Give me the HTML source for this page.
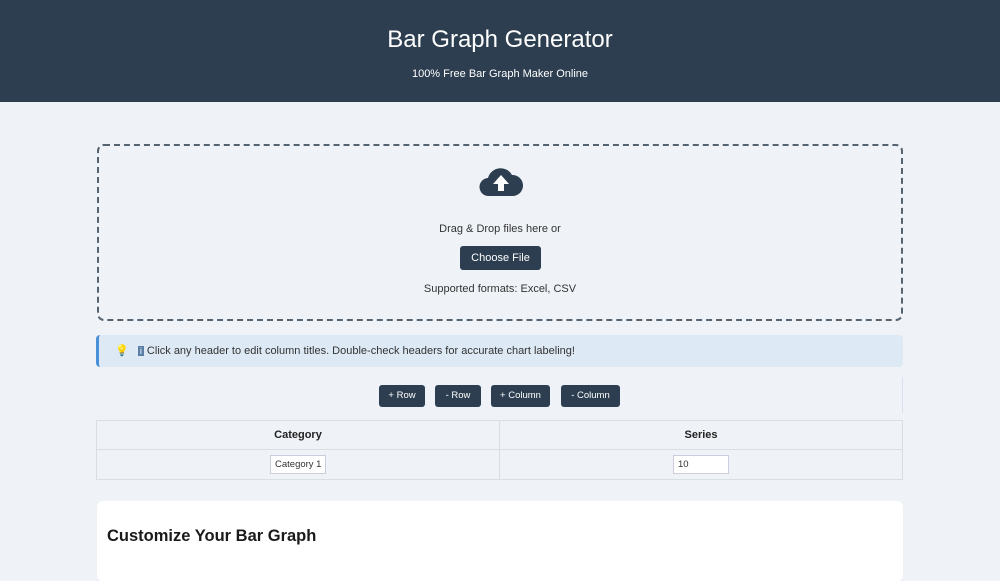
<!DOCTYPE html>
<html><head><style>
*{box-sizing:border-box;margin:0;padding:0}
body{width:1000px;height:563px;overflow:hidden;background:#eff3f7;font-family:"Liberation Sans","DejaVu Sans",sans-serif;color:#2c3e50;position:relative}
.hdr{position:absolute;left:0;top:0;width:1000px;height:102px;background:#2c3e50;color:#fff;text-align:center}
.hdr h1{position:absolute;top:26px;width:100%;font-size:24px;font-weight:normal}
.hdr p{position:absolute;top:68px;width:100%;font-size:11px}
.up{position:absolute;left:97px;top:144px;width:806px;height:177px;border:2px dashed #556270;border-radius:7px;text-align:center;font-size:11px;color:#333}
.btn{background:#2c3e50;color:#fff;border-radius:3px;display:inline-block}
.info{position:absolute;left:96px;top:335px;width:807px;height:32px;background:#dde9f4;border-left:3px solid #4a90d9;border-radius:4px;font-size:11px;color:#333;padding:9px 0 0 16px}
.sb{position:absolute;top:385px;height:22px;font-size:9.5px;line-height:22px;text-align:center}
table{position:absolute;left:96px;top:420px;width:807px;border-collapse:collapse;font-size:11px}
td,th{border:1px solid #d9dee3;text-align:center;width:50%}
th{height:29px;font-weight:bold;color:#222}
td{height:30px}
.in{display:inline-block;background:#fff;border:1px solid #ccd;height:19px;font-size:9.5px;line-height:17px;text-align:left;padding-left:4px;color:#333}
.card{position:absolute;left:97px;top:501px;width:806px;height:80px;background:#fff;border-radius:6px}
.card h2{position:absolute;left:10px;top:26px;font-size:16.5px;font-weight:bold;color:#1a1a1a}
</style></head><body>
<div class="hdr"><h1>Bar Graph Generator</h1><p>100% Free Bar Graph Maker Online</p></div>
<div class="up">
<svg style="position:absolute;left:380px;top:20px" width="44" height="32" viewBox="0 0 44 32"><path d="M10 30 A9 9 0 0 1 9 12 A13 13 0 0 1 33 9 A10.5 10.5 0 0 1 34 30 Z" fill="#2c3e50"/><path d="M22 9 L30 18 H25 V25 H19 V18 H14 Z" fill="#fff"/></svg>
<div style="position:absolute;top:77px;width:100%">Drag &amp; Drop files here or</div>
<div class="btn" style="position:absolute;left:361px;top:100px;width:81px;height:24px;line-height:24px;font-size:11px">Choose File</div>
<div style="position:absolute;top:137px;width:100%">Supported formats: Excel, CSV</div>
</div>
<div class="info">💡&nbsp;&nbsp; <span style="background:#5b7fa6;color:#fff;font-size:9px;padding:0 2px">i</span> Click any header to edit column titles. Double-check headers for accurate chart labeling!</div>
<div class="btn sb" style="left:379px;width:46px">+ Row</div>
<div class="btn sb" style="left:435px;width:46px">- Row</div>
<div class="btn sb" style="left:491px;width:59px">+ Column</div>
<div class="btn sb" style="left:561px;width:59px">- Column</div>
<div style="position:absolute;left:902px;top:377px;width:1px;height:36px;background:#dde"></div>
<table><tr><th>Category</th><th>Series</th></tr>
<tr><td><span class="in" style="width:56px">Category 1</span></td><td><span class="in" style="width:56px">10</span></td></tr></table>
<div class="card"><h2>Customize Your Bar Graph</h2></div>
</body></html>
